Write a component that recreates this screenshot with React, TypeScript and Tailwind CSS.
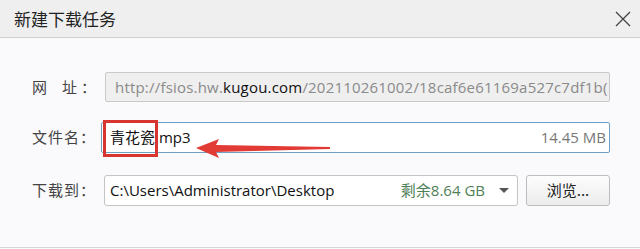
import React from "react";

const font = { fontFamily: '"Open Sans", "Noto Sans CJK SC", sans-serif' };
const cjk = { fontFamily: '"Noto Sans CJK SC", sans-serif' };

export default function App() {
  return (
    <div className="relative w-[640px] h-[249px] bg-[#fafafc] overflow-hidden" style={font}>
      <div className="h-[38px] bg-[#efeff0] border-b border-[#cfcfd2] flex items-center justify-between pl-[14px] pr-[8px]">
        <span className="text-[17px] text-[#222] leading-none" style={cjk}>新建下载任务</span>
        <svg width="18" height="18" viewBox="0 0 18 18">
          <path d="M2 2 L16 16 M16 2 L2 16" stroke="#444" strokeWidth="1.3" />
        </svg>
      </div>
      <div className="flex flex-col pl-[32px] pr-[30px]">
        <div className="flex items-center mt-[34px] h-[30px]">
          <span className="w-[73px] flex text-[15px] text-[#444]" style={cjk}>
            <span>网</span><span className="ml-[15px]">址</span><span className="ml-[4px]">：</span>
          </span>
          <div className="flex-1 h-[30px] bg-[#efefef] border border-[#c9c9c9] rounded-[2px] flex items-center pl-[9px] overflow-hidden whitespace-nowrap text-[15px] tracking-[0.2px] text-[#8a8a8a]">
            http://fsios.hw.<span className="text-[#111]">kugou.com</span>/202110261002/18caf6e61169a527c7df1b(
          </div>
        </div>
        <div className="flex items-center mt-[20px] h-[31px]">
          <span className="w-[69px] text-[15px] tracking-[1px] text-[#444]" style={cjk}>文件名：</span>
          <div className="flex-1 h-[31px] bg-white border border-[#6f9fc3] rounded-[2px] flex items-center justify-between pl-[8px] pr-[3px] text-[15px] text-[#111]">
            <span><span style={cjk}>青花瓷</span>.mp3</span>
            <span className="text-[#777]">14.45 MB</span>
          </div>
        </div>
        <div className="flex items-center mt-[22px] h-[31px]">
          <span className="w-[72px] text-[15px] tracking-[1px] text-[#444]" style={cjk}>下载到：</span>
          <div className="w-[414px] h-[31px] bg-white border border-[#c4c4c4] rounded-[3px] flex items-center pl-[5px] pr-[8px] text-[15px] text-[#111]">
            <span className="flex-1">C:\Users\Administrator\Desktop</span>
            <span className="text-[#4f7f57]"><span style={cjk}>剩余</span>8.64 GB</span>
            <svg width="10" height="6" viewBox="0 0 10 6" className="ml-[14px]">
              <path d="M0 0 L10 0 L5 5 Z" fill="#555" />
            </svg>
          </div>
          <div className="ml-[8px] w-[84px] h-[31px] bg-gradient-to-b from-[#fdfdfd] to-[#ececec] border border-[#bdbdbd] rounded-[3px] flex items-center justify-center text-[15px] text-[#222]" style={cjk}>
            浏览...
          </div>
        </div>
      </div>
      <div className="absolute left-0 right-0 bottom-[1px] h-[1px] bg-[#d6d6d8]" />
      <div className="absolute left-[103px] top-[120px] w-[55px] h-[37px] border-[3px] border-[#d93530]" />
      <svg className="absolute left-[190px] top-[136px]" width="150" height="26" viewBox="0 0 150 26">
        <path d="M6 12 L29 3 L26 9 L140 11 L140 13 L26 16 L29 22 Z" fill="#e23a34" />
      </svg>
    </div>
  );
}
